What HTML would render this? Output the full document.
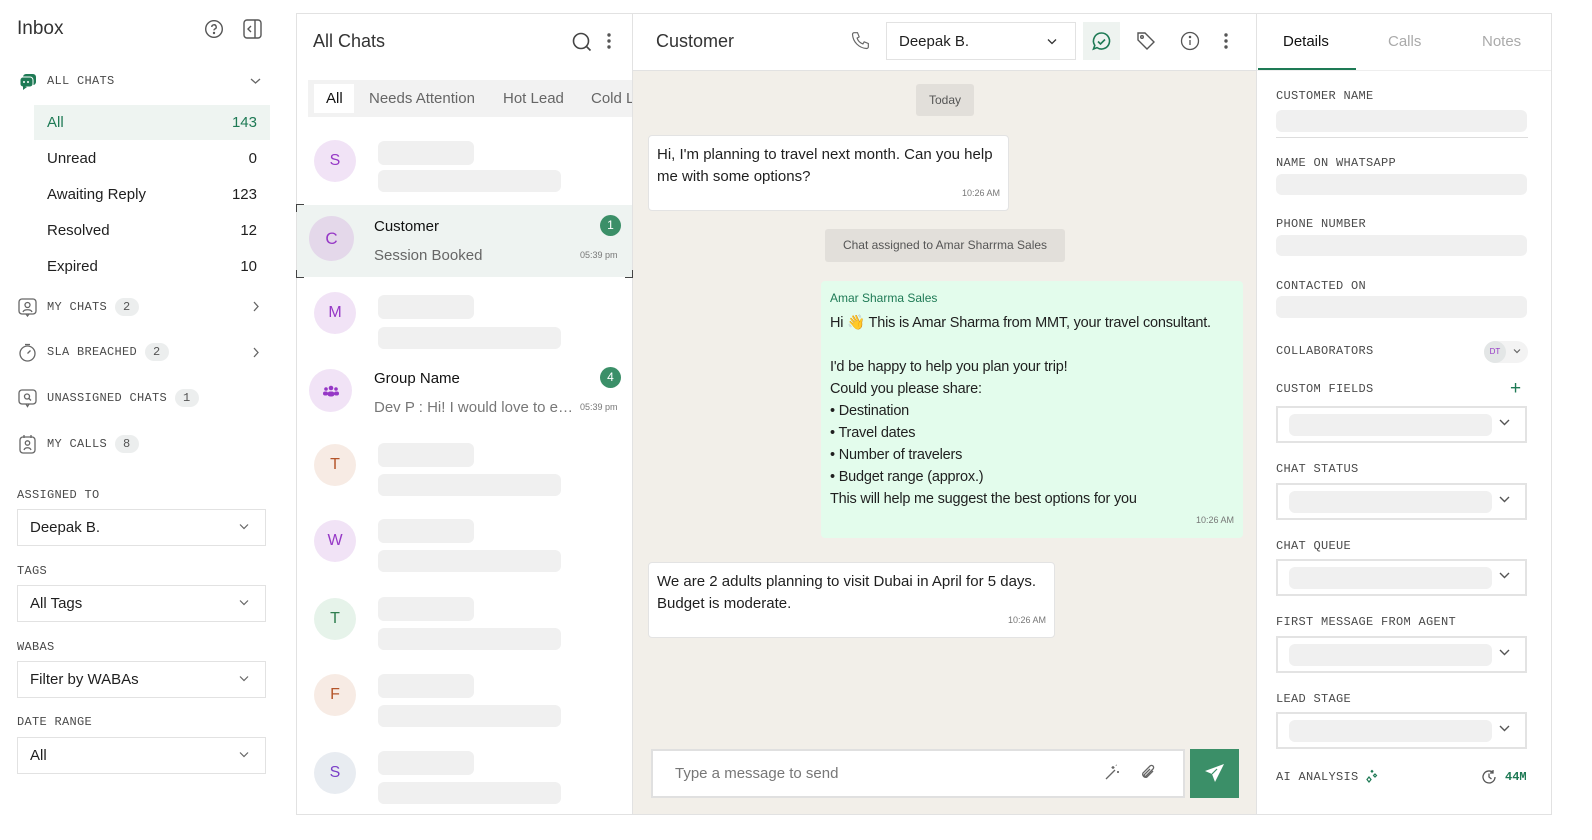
<!DOCTYPE html>
<html><head><meta charset="utf-8"><style>
*{box-sizing:border-box;margin:0;padding:0}
body{width:1592px;height:840px;background:#fff;font-family:"Liberation Sans",sans-serif;color:#1f1f1f;position:relative;overflow:hidden}
.a{position:absolute}
.mono{font-family:"Liberation Mono",monospace;font-size:12px;color:#4a4a4a;letter-spacing:.3px}
.row{position:absolute;left:47px;width:210px;font-size:15px;display:flex;justify-content:space-between}
.badge{display:inline-block;background:#eceeee;border-radius:12px;padding:2px 8px;font-size:12px;margin-left:8px;color:#555}
.sel{position:absolute;left:17px;width:249px;height:37px;border:1px solid #e2e2e2;font-size:15px;padding:9px 12px}
.sel svg{position:absolute;right:16px;top:13px}
.av{position:absolute;left:314px;width:42px;height:42px;border-radius:50%;display:flex;align-items:center;justify-content:center;font-size:16px}
.sk{position:absolute;background:#f0f0f0;border-radius:6px}
.bub{position:absolute;background:#fff;border:1px solid #e3e3e3;border-radius:4px;font-size:15px;line-height:22px;padding:8px 8px}
.tm{position:absolute;right:8px;bottom:6px;font-size:9px;color:#777}
.dbox{position:absolute;left:1276px;width:251px;height:37px;border:2px solid #e3e3e3}
.dbox .sk{left:11px;top:6px;width:203px;height:22px}
.dbox svg{position:absolute;right:15px;top:11px}
</style></head><body>
<!-- Sidebar -->
<div class="a" style="left:17px;top:18px;font-size:19px;color:#333">Inbox</div>
<svg class="a" style="left:204px;top:19px" width="20" height="20" viewBox="0 0 20 20" fill="none" stroke="#555" stroke-width="1.4"><circle cx="10" cy="10" r="8.3"/><path d="M7.8 8a2.2 2.2 0 1 1 3 2c-.6.3-.8.7-.8 1.4"/><circle cx="10" cy="14" r=".5" fill="#555"/></svg>
<svg class="a" style="left:243px;top:19px" width="19" height="20" viewBox="0 0 19 20" fill="none" stroke="#555" stroke-width="1.4"><rect x="1" y="1" width="17" height="18" rx="3"/><path d="M12 1v18M8 7l-3 3 3 3"/></svg>
<svg class="a" style="left:19px;top:73px" width="18" height="18" viewBox="0 0 18 18"><rect x="4" y="1" width="13" height="11" rx="3" fill="#1e7a55"/><rect x="1" y="4" width="13" height="10" rx="3" fill="#1e7a55" stroke="#fff" stroke-width="1"/><path d="M4 13l0 4 4-3z" fill="#1e7a55"/><circle cx="5" cy="9" r="1" fill="#fff"/><circle cx="9" cy="9" r="1" fill="#fff"/></svg>
<div class="a mono" style="left:47px;top:74px">ALL CHATS</div>
<svg class="a" style="left:250px;top:77px" width="11" height="8" viewBox="0 0 11 8" fill="none" stroke="#666" stroke-width="1.3"><path d="M1 2l4.5 4 4.5-4"/></svg>
<div class="a" style="left:34px;top:105px;width:236px;height:35px;background:#eef4f1"></div>
<div class="row" style="top:114px;color:#1e7a55"><span>All</span><span>143</span></div>
<div class="row" style="top:150px"><span>Unread</span><span>0</span></div>
<div class="row" style="top:186px"><span>Awaiting Reply</span><span>123</span></div>
<div class="row" style="top:222px"><span>Resolved</span><span>12</span></div>
<div class="row" style="top:258px"><span>Expired</span><span>10</span></div>
<svg class="a" style="left:18px;top:298px" width="19" height="19" viewBox="0 0 19 19" fill="none" stroke="#666" stroke-width="1.3"><rect x="1" y="1" width="17" height="15" rx="3"/><circle cx="9.5" cy="7" r="2.5"/><path d="M5 14c1-3 8-3 9 0M8 16l1.5 2 1.5-2"/></svg>
<div class="a mono" style="left:47px;top:298px">MY CHATS<span class="badge">2</span></div>
<svg class="a" style="left:252px;top:301px" width="8" height="11" viewBox="0 0 8 11" fill="none" stroke="#666" stroke-width="1.3"><path d="M2 1l4 4.5L2 10"/></svg>
<svg class="a" style="left:18px;top:343px" width="19" height="19" viewBox="0 0 19 19" fill="none" stroke="#666" stroke-width="1.3"><circle cx="9.5" cy="10.5" r="7.5"/><path d="M7 1.5h5M9.5 10.5l3-3"/></svg>
<div class="a mono" style="left:47px;top:343px">SLA BREACHED<span class="badge">2</span></div>
<svg class="a" style="left:252px;top:347px" width="8" height="11" viewBox="0 0 8 11" fill="none" stroke="#666" stroke-width="1.3"><path d="M2 1l4 4.5L2 10"/></svg>
<svg class="a" style="left:18px;top:389px" width="19" height="19" viewBox="0 0 19 19" fill="none" stroke="#666" stroke-width="1.3"><rect x="1" y="1" width="17" height="14" rx="3"/><circle cx="9" cy="7.5" r="2.5"/><path d="M11 9.5l2 2M8 15l1.5 2.5 1.5-2.5"/></svg>
<div class="a mono" style="left:47px;top:389px">UNASSIGNED CHATS<span class="badge">1</span></div>
<svg class="a" style="left:18px;top:434px" width="19" height="20" viewBox="0 0 19 20" fill="none" stroke="#666" stroke-width="1.3"><rect x="2" y="3" width="15" height="16" rx="3"/><path d="M6 1v3M13 1v3"/><circle cx="9.5" cy="9" r="2.2"/><path d="M6 16c1-3 6-3 7 0"/></svg>
<div class="a mono" style="left:47px;top:435px">MY CALLS<span class="badge">8</span></div>
<div class="a mono" style="left:17px;top:488px">ASSIGNED TO</div>
<div class="sel" style="top:509px">Deepak B.<svg width="10" height="7" viewBox="0 0 10 7" fill="none" stroke="#666" stroke-width="1.2"><path d="M1 1.5l4 4 4-4"/></svg></div>
<div class="a mono" style="left:17px;top:564px">TAGS</div>
<div class="sel" style="top:585px">All Tags<svg width="10" height="7" viewBox="0 0 10 7" fill="none" stroke="#666" stroke-width="1.2"><path d="M1 1.5l4 4 4-4"/></svg></div>
<div class="a mono" style="left:17px;top:640px">WABAS</div>
<div class="sel" style="top:661px">Filter by WABAs<svg width="10" height="7" viewBox="0 0 10 7" fill="none" stroke="#666" stroke-width="1.2"><path d="M1 1.5l4 4 4-4"/></svg></div>
<div class="a mono" style="left:17px;top:715px">DATE RANGE</div>
<div class="sel" style="top:737px">All<svg width="10" height="7" viewBox="0 0 10 7" fill="none" stroke="#666" stroke-width="1.2"><path d="M1 1.5l4 4 4-4"/></svg></div>

<!-- outer frame -->
<div class="a" style="left:296px;top:13px;width:1256px;height:802px;border:1px solid #e2e2e2"></div>
<!-- Chat list -->
<div class="a" style="left:313px;top:31px;font-size:18px;color:#333">All Chats</div>
<svg class="a" style="left:571px;top:31px" width="22" height="22" viewBox="0 0 22 22" fill="none" stroke="#444" stroke-width="1.6"><circle cx="10" cy="10" r="7.5"/><path d="M15.5 15.5l4 4"/></svg>
<svg class="a" style="left:606px;top:32px" width="6" height="18" viewBox="0 0 6 18" fill="#555"><circle cx="3" cy="3" r="1.7"/><circle cx="3" cy="9" r="1.7"/><circle cx="3" cy="15" r="1.7"/></svg>
<div class="a" style="left:308px;top:80px;width:324px;height:37px;background:#f2f2f2;overflow:hidden;font-size:15px;color:#666;white-space:nowrap">
<div class="a" style="left:6px;top:4px;width:40px;height:29px;background:#fff"></div>
<span class="a" style="left:18px;top:10px;color:#111">All</span>
<span class="a" style="left:61px;top:10px">Needs Attention</span>
<span class="a" style="left:195px;top:10px">Hot Lead</span>
<span class="a" style="left:283px;top:10px">Cold Lead</span></div>
<div class="a" style="left:632px;top:13px;width:1px;height:802px;background:#e2e2e2"></div>

<div class="av" style="top:140px;background:#f1e3f6;color:#9638c6">S</div>
<div class="sk" style="left:378px;top:141px;width:96px;height:24px"></div><div class="sk" style="left:378px;top:170px;width:183px;height:22px"></div>

<div class="a" style="left:297px;top:205px;width:335px;height:72px;background:#eef3f1"></div>
<div class="a" style="left:296px;top:204px;width:8px;height:8px;border-left:1.5px solid #444;border-top:1.5px solid #444"></div>
<div class="a" style="left:296px;top:270px;width:8px;height:8px;border-left:1.5px solid #444;border-bottom:1.5px solid #444"></div>
<div class="a" style="left:625px;top:270px;width:8px;height:8px;border-right:1.5px solid #444;border-bottom:1.5px solid #444"></div>
<div class="av" style="left:309px;top:216px;width:45px;height:45px;background:#e4d8ea;color:#9638c6;font-size:17px">C</div>
<div class="a" style="left:374px;top:218px;font-size:15px;color:#111">Customer</div>
<div class="a" style="left:374px;top:247px;font-size:15px;color:#666">Session Booked</div>
<div class="a" style="left:600px;top:215px;width:21px;height:21px;border-radius:50%;background:#3b8f68;color:#fff;font-size:12px;text-align:center;line-height:21px">1</div>
<div class="a" style="left:580px;top:250px;font-size:9px;color:#777">05:39 pm</div>

<div class="av" style="top:292px;background:#f1e3f6;color:#9638c6">M</div>
<div class="sk" style="left:378px;top:295px;width:96px;height:24px"></div><div class="sk" style="left:378px;top:327px;width:183px;height:22px"></div>

<div class="av" style="left:309px;top:369px;width:43px;height:43px;background:#f1e3f6;color:#9638c6"><svg width="18" height="14" viewBox="0 0 18 14" fill="#9638c6"><circle cx="9" cy="4" r="2.3"/><circle cx="4" cy="5" r="1.8"/><circle cx="14" cy="5" r="1.8"/><rect x="5.5" y="7.5" width="7" height="5" rx="2.5"/><rect x="1" y="7.5" width="5" height="4" rx="2"/><rect x="12" y="7.5" width="5" height="4" rx="2"/></svg></div>
<div class="a" style="left:374px;top:370px;font-size:15px;color:#111">Group Name</div>
<div class="a" style="left:374px;top:399px;font-size:15px;color:#777;width:202px;white-space:nowrap;overflow:hidden;text-overflow:ellipsis">Dev P : Hi! I would love to enlist</div>
<div class="a" style="left:600px;top:367px;width:21px;height:21px;border-radius:50%;background:#3b8f68;color:#fff;font-size:12px;text-align:center;line-height:21px">4</div>
<div class="a" style="left:580px;top:402px;font-size:9px;color:#777">05:39 pm</div>

<div class="av" style="top:444px;background:#f7ebe4;color:#b4552a">T</div>
<div class="sk" style="left:378px;top:443px;width:96px;height:24px"></div><div class="sk" style="left:378px;top:474px;width:183px;height:22px"></div>
<div class="av" style="top:520px;background:#f1e3f6;color:#9638c6">W</div>
<div class="sk" style="left:378px;top:519px;width:96px;height:24px"></div><div class="sk" style="left:378px;top:550px;width:183px;height:22px"></div>
<div class="av" style="top:598px;background:#e6f3ea;color:#2e7d4f">T</div>
<div class="sk" style="left:378px;top:597px;width:96px;height:24px"></div><div class="sk" style="left:378px;top:628px;width:183px;height:22px"></div>
<div class="av" style="top:674px;background:#f7ebe4;color:#b4552a">F</div>
<div class="sk" style="left:378px;top:674px;width:96px;height:24px"></div><div class="sk" style="left:378px;top:705px;width:183px;height:22px"></div>
<div class="av" style="top:752px;background:#e8ecf1;color:#7a3fc8">S</div>
<div class="sk" style="left:378px;top:751px;width:96px;height:24px"></div><div class="sk" style="left:378px;top:782px;width:183px;height:22px"></div>

<!-- Chat panel -->
<div class="a" style="left:633px;top:70px;width:623px;height:744px;background:#f2efe9;border-top:1px solid #e2e2e2"></div>
<div class="a" style="left:656px;top:31px;font-size:18px;color:#333">Customer</div>
<svg class="a" style="left:850px;top:31px" width="20" height="20" viewBox="0 0 24 24" fill="none" stroke="#666" stroke-width="1.4"><path d="M5 2h4l2 5-2.5 1.5a11 11 0 0 0 7 7L17 13l5 2v4a2 2 0 0 1-2 2A18 18 0 0 1 3 4a2 2 0 0 1 2-2z"/></svg>
<div class="a" style="left:886px;top:22px;width:190px;height:38px;border:1px solid #e2e2e2;font-size:15px;padding:10px 12px">Deepak B.<svg class="a" style="right:18px;top:15px" width="10" height="7" viewBox="0 0 10 7" fill="none" stroke="#333" stroke-width="1.3"><path d="M1 1.5l4 4 4-4"/></svg></div>
<div class="a" style="left:1083px;top:22px;width:37px;height:38px;background:#eef3f0"></div>
<svg class="a" style="left:1091px;top:31px" width="21" height="21" viewBox="0 0 21 21" fill="none" stroke="#1e7a55" stroke-width="1.6"><path d="M10.5 2a8 8 0 1 1-4.5 14.6L2.5 18l1.3-3.6A8 8 0 0 1 10.5 2z"/><path d="M7 10.5l2.5 2.5 4.5-4.5"/></svg>
<svg class="a" style="left:1136px;top:31px" width="20" height="20" viewBox="0 0 20 20" fill="none" stroke="#555" stroke-width="1.4"><path d="M2 2h7l9 9-7 7-9-9z"/><circle cx="6" cy="6" r="1.3"/></svg>
<svg class="a" style="left:1180px;top:31px" width="20" height="20" viewBox="0 0 20 20" fill="none" stroke="#555" stroke-width="1.3"><circle cx="10" cy="10" r="8.5"/><path d="M10 9v5"/><circle cx="10" cy="6" r=".6" fill="#555"/></svg>
<svg class="a" style="left:1223px;top:32px" width="6" height="18" viewBox="0 0 6 18" fill="#555"><circle cx="3" cy="3" r="1.7"/><circle cx="3" cy="9" r="1.7"/><circle cx="3" cy="15" r="1.7"/></svg>

<div class="a" style="left:916px;top:84px;width:58px;height:32px;background:#e2dfda;border-radius:3px;font-size:12px;color:#555;text-align:center;line-height:32px">Today</div>
<div class="bub" style="left:648px;top:135px;width:361px;height:76px">Hi, I'm planning to travel next month. Can you help me with some options?<span class="tm">10:26 AM</span></div>
<div class="a" style="left:825px;top:229px;width:240px;height:33px;background:#e2dfda;border-radius:3px;font-size:12px;color:#555;text-align:center;line-height:33px">Chat assigned to Amar Sharrma Sales</div>
<div class="bub" style="left:821px;top:281px;width:422px;height:257px;background:#e3fcec;border-color:#e3fcec;font-size:14.5px;white-space:nowrap;letter-spacing:-0.2px">
<div style="font-size:12px;color:#1e7a55;line-height:16px;margin-bottom:6px;letter-spacing:0">Amar Sharma Sales</div>
Hi 👋 This is Amar Sharma from MMT, your travel consultant.<br><br>I'd be happy to help you plan your trip!<br>Could you please share:<br>• Destination<br>• Travel dates<br>• Number of travelers<br>• Budget range (approx.)<br>This will help me suggest the best options for you<span class="tm" style="letter-spacing:0">10:26 AM</span></div>
<div class="bub" style="left:648px;top:562px;width:407px;height:76px">We are 2 adults planning to visit Dubai in April for 5 days. Budget is moderate.<span class="tm">10:26 AM</span></div>
<div class="a" style="left:651px;top:749px;width:534px;height:49px;background:#fff;border:2px solid #e0e0e0;font-size:15px;color:#777;padding:14px 22px">Type a message to send</div>
<svg class="a" style="left:1103px;top:763px" width="18" height="18" viewBox="0 0 18 18" fill="none" stroke="#666" stroke-width="1.3"><path d="M3 16l9-9M10 3v3M8.5 4.5h3M15 8v2M14 9h2M13 2l.5.5"/></svg>
<svg class="a" style="left:1139px;top:763px" width="19" height="19" viewBox="0 0 19 19" fill="none" stroke="#666" stroke-width="1.3"><path d="M14 8l-6 6a3 3 0 0 1-4-4l7-7a2 2 0 0 1 3 3l-7 7a1 1 0 0 1-1.5-1.5L11 6"/></svg>
<div class="a" style="left:1190px;top:749px;width:49px;height:49px;background:#3b8f68"></div>
<svg class="a" style="left:1204px;top:763px" width="21" height="21" viewBox="0 0 21 21"><path d="M20 1L1 8l7 3 3 8z" fill="#fff"/><path d="M8 11l5-5" stroke="#3b8f68" stroke-width="1.2"/></svg>

<!-- Details -->
<div class="a" style="left:1256px;top:13px;width:1px;height:802px;background:#e2e2e2"></div>
<div class="a" style="left:1283px;top:33px;font-size:15px;color:#111">Details</div>
<div class="a" style="left:1388px;top:33px;font-size:15px;color:#aaa">Calls</div>
<div class="a" style="left:1482px;top:33px;font-size:15px;color:#aaa">Notes</div>
<div class="a" style="left:1258px;top:68px;width:98px;height:2px;background:#1e7a55"></div>
<div class="a" style="left:1257px;top:70px;width:294px;height:1px;background:#eee"></div>
<div class="a mono" style="left:1276px;top:89px">CUSTOMER NAME</div>
<div class="sk" style="left:1276px;top:110px;width:251px;height:22px"></div>
<div class="a" style="left:1276px;top:137px;width:252px;height:1px;background:#ddd"></div>
<div class="a mono" style="left:1276px;top:156px">NAME ON WHATSAPP</div>
<div class="sk" style="left:1276px;top:174px;width:251px;height:21px"></div>
<div class="a mono" style="left:1276px;top:217px">PHONE NUMBER</div>
<div class="sk" style="left:1276px;top:235px;width:251px;height:21px"></div>
<div class="a mono" style="left:1276px;top:279px">CONTACTED ON</div>
<div class="sk" style="left:1276px;top:296px;width:251px;height:22px"></div>
<div class="a mono" style="left:1276px;top:344px">COLLABORATORS</div>
<div class="a" style="left:1484px;top:341px;width:44px;height:22px;border-radius:11px;background:#f3f3f3"></div>
<div class="a" style="left:1484px;top:341px;width:22px;height:22px;border-radius:50%;background:#e3e6e6;font-size:8px;color:#9638c6;text-align:center;line-height:22px">DT</div>
<svg class="a" style="left:1513px;top:348px" width="8" height="6" viewBox="0 0 8 6" fill="none" stroke="#666" stroke-width="1.2"><path d="M1 1.5l3 3 3-3"/></svg>
<div class="a mono" style="left:1276px;top:382px">CUSTOM FIELDS</div>
<div class="a" style="left:1510px;top:379px;font-size:19px;color:#1e7a55;line-height:20px">+</div>
<div class="dbox" style="top:406px"><div class="sk"></div><svg width="11" height="7" viewBox="0 0 11 7" fill="none" stroke="#555" stroke-width="1.4"><path d="M1 1l4.5 4.5L10 1"/></svg></div>
<div class="a mono" style="left:1276px;top:462px">CHAT STATUS</div>
<div class="dbox" style="top:483px"><div class="sk"></div><svg width="11" height="7" viewBox="0 0 11 7" fill="none" stroke="#555" stroke-width="1.4"><path d="M1 1l4.5 4.5L10 1"/></svg></div>
<div class="a mono" style="left:1276px;top:539px">CHAT QUEUE</div>
<div class="dbox" style="top:559px"><div class="sk"></div><svg width="11" height="7" viewBox="0 0 11 7" fill="none" stroke="#555" stroke-width="1.4"><path d="M1 1l4.5 4.5L10 1"/></svg></div>
<div class="a mono" style="left:1276px;top:615px">FIRST MESSAGE FROM AGENT</div>
<div class="dbox" style="top:636px"><div class="sk"></div><svg width="11" height="7" viewBox="0 0 11 7" fill="none" stroke="#555" stroke-width="1.4"><path d="M1 1l4.5 4.5L10 1"/></svg></div>
<div class="a mono" style="left:1276px;top:692px">LEAD STAGE</div>
<div class="dbox" style="top:712px"><div class="sk"></div><svg width="11" height="7" viewBox="0 0 11 7" fill="none" stroke="#555" stroke-width="1.4"><path d="M1 1l4.5 4.5L10 1"/></svg></div>
<div class="a mono" style="left:1276px;top:770px">AI ANALYSIS</div>
<svg class="a" style="left:1365px;top:769px" width="15" height="15" viewBox="0 0 15 15" fill="none" stroke="#1e7a55" stroke-width="1.2"><path d="M4 8l2 2.5-2 2.5-2-2.5zM10 5l1.5 1.5L10 8 8.5 6.5zM7 1.5l.8.8-.8.8-.8-.8z"/></svg>
<svg class="a" style="left:1481px;top:769px" width="16" height="16" viewBox="0 0 16 16" fill="none" stroke="#555" stroke-width="1.3"><path d="M14 8a6 6 0 1 1-2-4.5M8 4.5V8l2.5 2M12 1v3h-3"/></svg>
<div class="a" style="left:1505px;top:770px;font-family:'Liberation Mono',monospace;font-size:12px;font-weight:bold;color:#1e7a55">44M</div>
</body></html>
